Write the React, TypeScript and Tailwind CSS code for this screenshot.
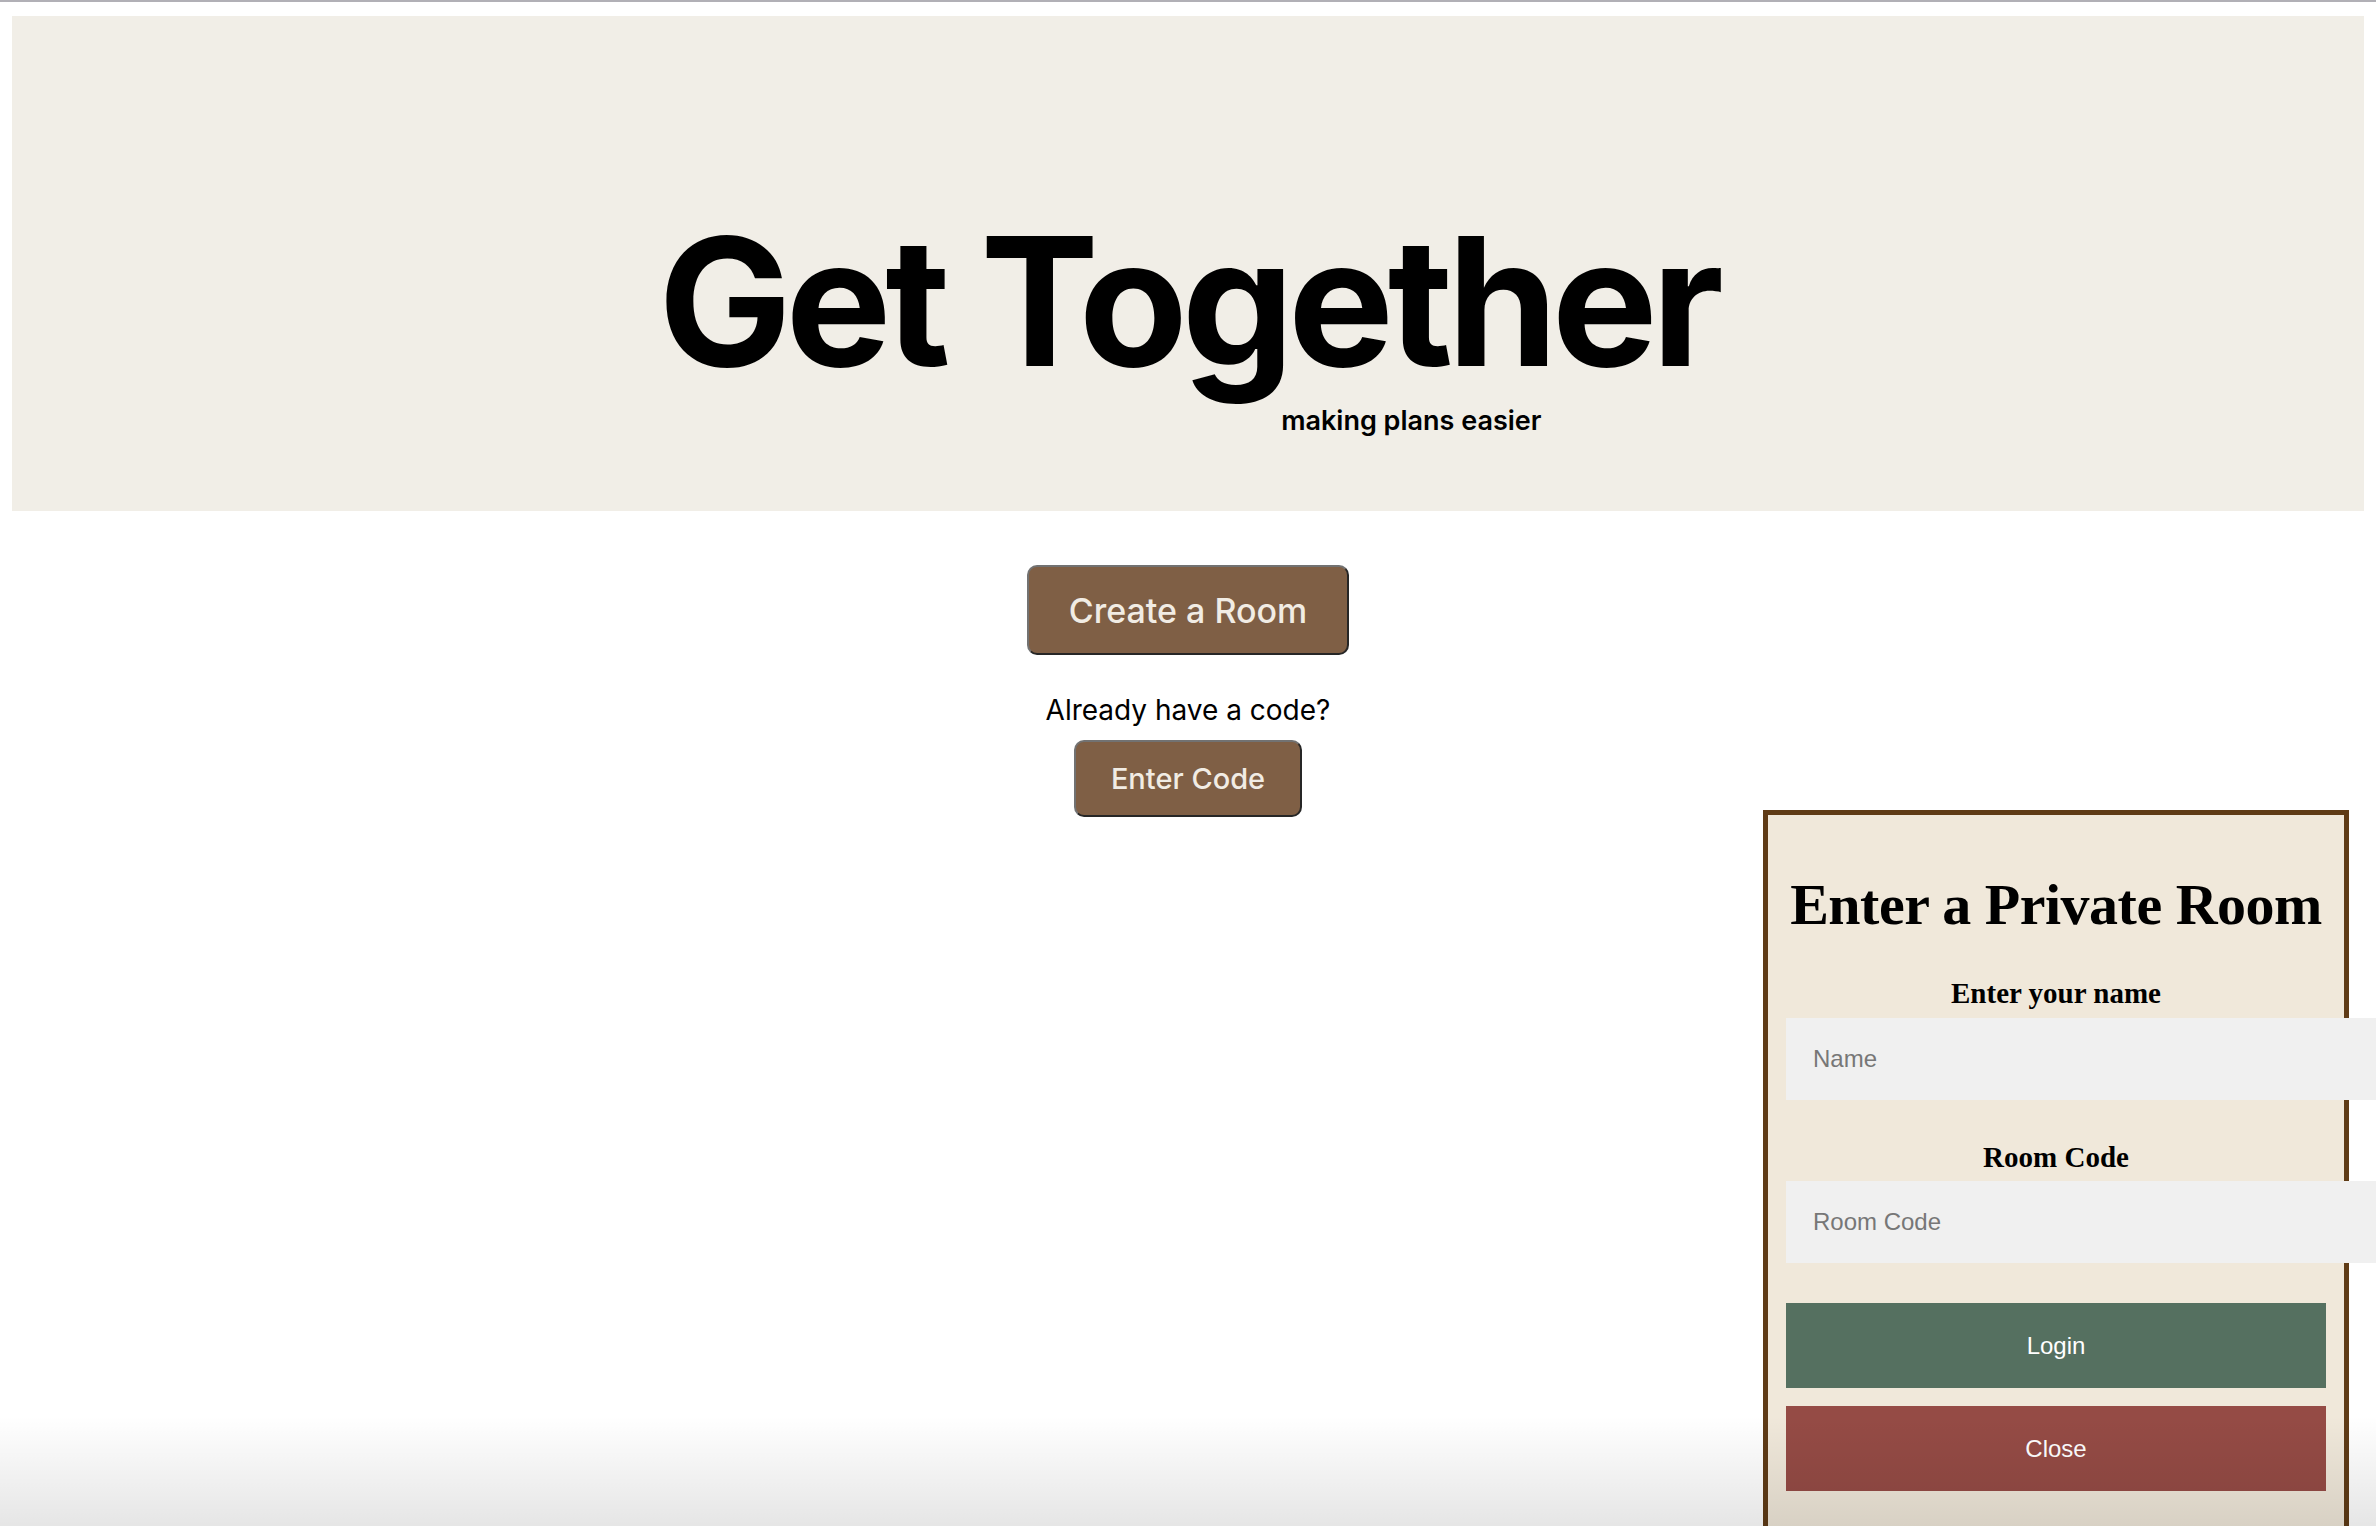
import { useState } from "react";

export default function App() {
  const [showModal, setShowModal] = useState(true);
  const [name, setName] = useState("");
  const [code, setCode] = useState("");

  return (
    <div className="relative h-[1526px] overflow-hidden bg-white">
      {/* top hairline */}
      <div className="h-[2px] bg-[#b1b0b6]" />

      {/* Hero */}
      <div className="mx-[12px] mt-[14px] bg-[#f1eee7] pt-[197px] pb-[77px] flex justify-center">
        <div className="inline-flex flex-col font-['Inter',sans-serif] text-black">
          <h1 className="text-[178px] font-bold leading-none tracking-[-0.035em]">Get Together</h1>
          <p className="ml-[623px] mt-[16px] text-[27px] font-semibold leading-none">making plans easier</p>
        </div>
      </div>

      {/* Actions */}
      <div className="flex flex-col items-center font-['Inter',sans-serif]">
        <button className="mt-[54px] w-[322px] h-[90px] rounded-[10px] border-2 border-t-[#727272] border-l-[#727272] border-r-[#262626] border-b-[#262626] bg-[#7f5f45] text-[#f1ece4] text-[34px] font-medium">
          Create a Room
        </button>
        <p className="mt-[39px] text-[28px] leading-[33px] text-black">Already have a code?</p>
        <button
          onClick={() => setShowModal(true)}
          className="mt-[13px] w-[228px] h-[77px] rounded-[10px] border-2 border-t-[#727272] border-l-[#727272] border-r-[#262626] border-b-[#262626] bg-[#7f5f45] text-[#f1ece4] text-[29px] font-medium"
        >
          Enter Code
        </button>
      </div>

      {/* Private room popup */}
      {showModal && (
        <div className="absolute left-[1763px] top-[810px] w-[586px] h-[800px] border-[5px] border-[#5f3b16] bg-[#f0e8da] px-[18px] pt-[61px]">
          <div className="flex flex-col items-center font-['Liberation_Serif',serif] text-black">
            <h2 className="text-[58px] font-bold leading-none tracking-[-0.5px] whitespace-nowrap">Enter a Private Room</h2>
            <label className="mt-[45px] text-[29px] font-bold leading-none">Enter your name</label>
          </div>
          <input
            value={name}
            onChange={(e) => setName(e.target.value)}
            placeholder="Name"
            className="mt-[10px] block w-[594px] h-[82px] bg-[#f0f0f0] px-[27px] font-['Liberation_Sans',sans-serif] text-[24px] text-black placeholder:text-[#777] outline-none"
          />
          <div className="flex justify-center font-['Liberation_Serif',serif]">
            <label className="mt-[43px] text-[29px] font-bold leading-none">Room Code</label>
          </div>
          <input
            value={code}
            onChange={(e) => setCode(e.target.value)}
            placeholder="Room Code"
            className="mt-[9px] block w-[594px] h-[82px] bg-[#f0f0f0] px-[27px] font-['Liberation_Sans',sans-serif] text-[24px] text-black placeholder:text-[#777] outline-none"
          />
          <div className="flex flex-col gap-[18px] mt-[40px] font-['Liberation_Sans',sans-serif] text-[24px] text-white">
            <button className="h-[85px] w-full bg-[#557060]">Login</button>
            <button onClick={() => setShowModal(false)} className="h-[85px] w-full bg-[#954b45]">Close</button>
          </div>
        </div>
      )}

      {/* window bottom shade */}
      <div className="pointer-events-none absolute inset-x-0 bottom-0 h-[110px] bg-linear-to-b from-black/0 to-black/10" />
    </div>
  );
}
